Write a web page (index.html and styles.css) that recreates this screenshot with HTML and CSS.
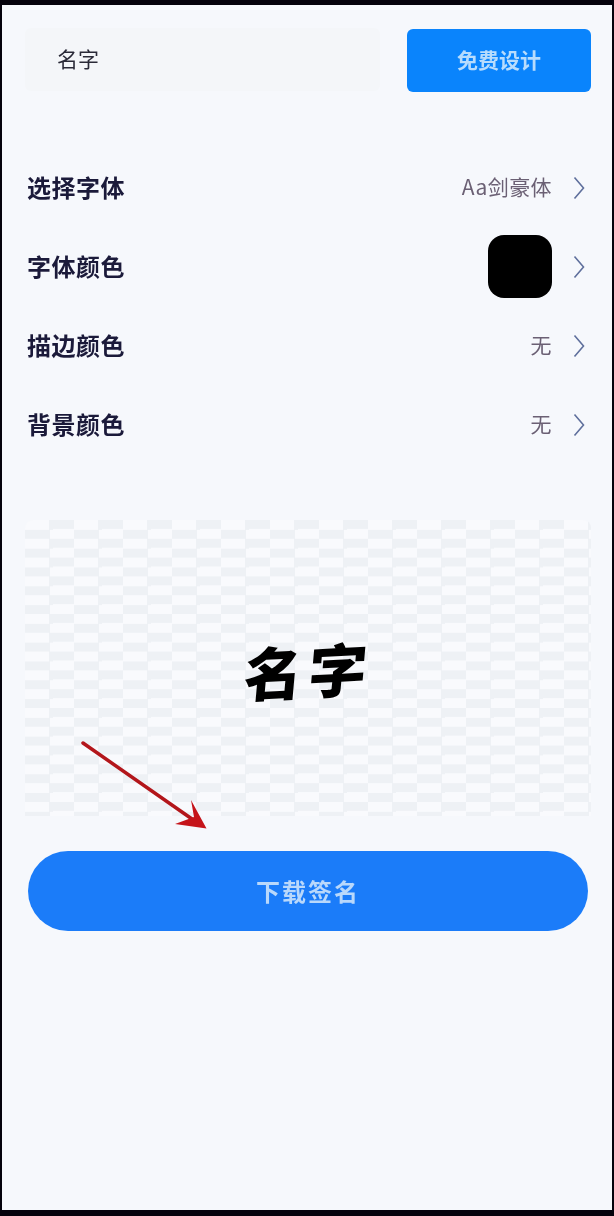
FILE: index.html
```html
<!DOCTYPE html>
<html lang="zh-CN">
<head>
<meta charset="utf-8">
<title>签名设计</title>
<link rel="stylesheet" href="styles.css">
</head>
<body>
<main class="screen">
  <section class="top">
    <div class="name-input">名字</div>
    <button class="design-btn">免费设计</button>
  </section>
  <section class="options">
    <div class="row">
      <span class="label">选择字体</span>
      <span class="value">Aa剑豪体</span>
      <svg class="chev" viewBox="0 0 12 24"><path d="M1.5 1.5 L10.5 12 L1.5 22.5"/></svg>
    </div>
    <div class="row">
      <span class="label">字体颜色</span>
      <span class="swatch"></span>
      <svg class="chev" viewBox="0 0 12 24"><path d="M1.5 1.5 L10.5 12 L1.5 22.5"/></svg>
    </div>
    <div class="row">
      <span class="label">描边颜色</span>
      <span class="value">无</span>
      <svg class="chev" viewBox="0 0 12 24"><path d="M1.5 1.5 L10.5 12 L1.5 22.5"/></svg>
    </div>
    <div class="row">
      <span class="label">背景颜色</span>
      <span class="value">无</span>
      <svg class="chev" viewBox="0 0 12 24"><path d="M1.5 1.5 L10.5 12 L1.5 22.5"/></svg>
    </div>
  </section>
  <section class="preview">
    <span class="signature">名字</span>
  </section>
  <button class="download-btn">下载签名</button>
  <svg class="arrow" viewBox="0 0 614 1216">
    <path class="arrow-line" d="M83 743 L192 819"/>
    <path class="arrow-head" d="M206.500 828.500 L191 800 L194 817 L175 824 Z"/>
  </svg>
</main>
</body>
</html>
```
FILE: styles.css
```css
* { box-sizing: border-box; }
html, body { margin: 0; height: 100%; }
body {
  width: 614px;
  height: 1216px;
  background: #05020c;
  padding: 5px 2px 6px;
  overflow: hidden;
  font-family: "Noto Sans CJK SC", "Noto Sans", sans-serif;
}
.screen {
  position: relative;
  height: 1205px;
  background: #f6f8fc;
  padding: 22px 21px 0 23px;
  overflow: hidden;
}
.top {
  display: flex;
  align-items: center;
  justify-content: space-between;
}
.name-input {
  width: 355px;
  height: 63px;
  margin-top: -1px;
  background: #f4f6f9;
  border-radius: 6px;
  padding-left: 32px;
  line-height: 61px;
  font-size: 21px;
  color: #2a2a38;
  filter: blur(.4px);
}
.design-btn {
  width: 184px;
  height: 63px;
  margin-top: 2px;
  padding: 0 0 4px;
  border: 0;
  border-radius: 6px;
  background: #0a84fc;
  color: #b7dcfd;
  font: 700 21px "Noto Sans CJK SC", sans-serif;
  filter: blur(.3px);
}
.options {
  margin-top: 56px;
  display: flex;
  flex-direction: column;
}
.row {
  height: 79px;
  display: flex;
  align-items: center;
  gap: 21px;
  padding-right: 6px;
}
.label {
  margin: -3px auto 0 2px;
  font-size: 24px;
  font-weight: 700;
  letter-spacing: .5px;
  color: #1b1a3a;
  filter: blur(.4px);
}
.value {
  margin-top: -3px;
  font-size: 21px;
  letter-spacing: .4px;
  color: #6b6074;
  filter: blur(.4px);
}
.swatch {
  width: 64px;
  height: 63px;
  background: #000;
  border-radius: 16px;
}
.chev {
  width: 12px;
  height: 24px;
  fill: none;
  stroke: #5f6f9c;
  stroke-width: 1.6;
}
.preview {
  margin-top: 56px;
  height: 296px;
  border-radius: 8px 8px 0 0;
  display: flex;
  align-items: center;
  justify-content: center;
  background-color: #f9fafd;
  background-image: conic-gradient(#eef1f5 25%, transparent 0 50%, #eef1f5 0 75%, transparent 0);
  background-size: 49px 18.800px;
}
.signature {
  margin: 2px 0 0 2px;
  font-size: 58px;
  font-weight: 900;
  line-height: 1;
  letter-spacing: 6px;
  color: #000;
  transform: skewX(-8deg) rotate(-3deg);
}
.download-btn {
  display: block;
  width: 560px;
  height: 80px;
  margin: 35px 0 0 3px;
  padding: 0 0 2px;
  border: 0;
  border-radius: 40px;
  background: #1b7cf9;
  color: #b9d8fb;
  font: 700 24px "Noto Sans CJK SC", sans-serif;
  letter-spacing: 2px;
  filter: blur(.3px);
}
.arrow {
  position: absolute;
  left: -2px;
  top: -5px;
  width: 614px;
  height: 1216px;
  pointer-events: none;
}
.arrow-line { stroke: #b3161b; stroke-width: 3.500; stroke-linecap: round; fill: none; }
.arrow-head { fill: #c5141a; }
```
